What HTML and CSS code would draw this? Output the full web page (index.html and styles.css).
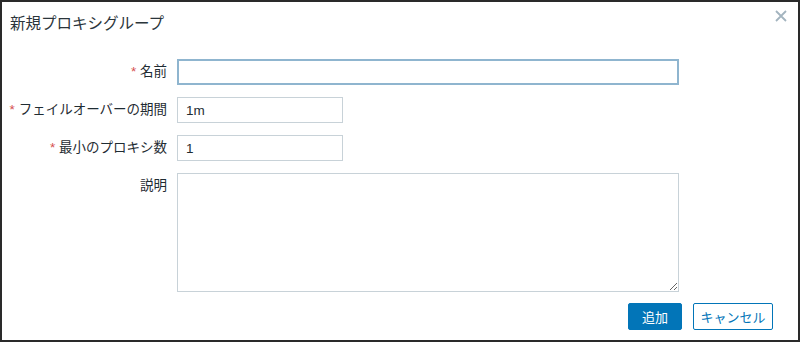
FILE: index.html
```html
<!DOCTYPE html>
<html lang="ja">
<head>
<meta charset="utf-8">
<title>新規プロキシグループ</title>
<link rel="stylesheet" href="styles.css">
</head>
<body>
<div class="dialog">
  <div class="header">
    <h1 class="title">新規プロキシグループ</h1>
    <span class="close">
      <svg width="12" height="12" viewBox="0 0 12 12"><path d="M1 1 L11 11 M11 1 L1 11" stroke="#a3b4bf" stroke-width="1.8" fill="none"/></svg>
    </span>
  </div>
  <form class="form">
    <label class="label"><span class="req">*</span> 名前</label>
    <input class="input wide focus" type="text" value="">
    <label class="label"><span class="req">*</span> フェイルオーバーの期間</label>
    <input class="input short" type="text" value="1m">
    <label class="label"><span class="req">*</span> 最小のプロキシ数</label>
    <input class="input short" type="text" value="1">
    <label class="label top">説明</label>
    <textarea class="input wide area"></textarea>
  </form>
  <div class="footer">
    <button class="btn primary" type="button">追加</button>
    <button class="btn secondary" type="button">キャンセル</button>
  </div>
</div>
</body>
</html>
```
FILE: styles.css
```css
html, body {
  margin: 0;
  padding: 0;
  background: #fff;
}
.dialog {
  box-sizing: border-box;
  width: 800px;
  height: 342px;
  border: 2px solid #2a2a2a;
  background: #fff;
  font-family: "Liberation Sans", "Noto Sans CJK JP", sans-serif;
  color: #1f2c33;
  display: flex;
  flex-direction: column;
}
.header {
  display: flex;
  justify-content: space-between;
  align-items: flex-start;
  height: 57px;
  flex: none;
  padding: 0 10px 0 8px;
}
.title {
  margin: 12px 0 0 0;
  font-size: 15.5px;
  font-weight: normal;
  line-height: 20px;
  color: #2b353b;
}
.close {
  margin-top: 8px;
  margin-right: 1px;
  display: block;
  line-height: 0;
}
.form {
  display: grid;
  grid-template-columns: 165px 502px;
  column-gap: 10px;
  row-gap: 12px;
  align-items: center;
  margin: 0;
}
.label {
  text-align: right;
  font-size: 13.5px;
  line-height: 16px;
  white-space: nowrap;
}
.label.top {
  align-self: start;
  padding-top: 5px;
}
.req {
  color: #d64e4e;
}
.input {
  box-sizing: border-box;
  height: 26px;
  border: 1px solid #c8d2d8;
  background: #fff;
  font-family: "Liberation Sans", "Noto Sans CJK JP", sans-serif;
  font-size: 13.5px;
  color: #1f2c33;
  padding: 0 8px;
  margin: 0;
  outline: none;
}
.wide { width: 502px; }
.short { width: 166px; }
.focus {
  border: 2px solid #8fb5cf;
}
.area {
  height: 119px;
  resize: both;
  padding: 6px 8px;
}
.footer {
  display: flex;
  justify-content: flex-end;
  gap: 11px;
  padding: 11px 25px 0 0;
}
.btn {
  box-sizing: border-box;
  height: 27px;
  font-family: "Liberation Sans", "Noto Sans CJK JP", sans-serif;
  font-size: 13px;
  border-radius: 2px;
  padding: 0;
  white-space: nowrap;
  cursor: pointer;
}
.primary {
  background: #0275b8;
  border: 1px solid #0275b8;
  color: #fff;
  width: 54px;
}
.secondary {
  background: #fff;
  border: 1px solid #0275b8;
  color: #0275b8;
  width: 80px;
}
```
